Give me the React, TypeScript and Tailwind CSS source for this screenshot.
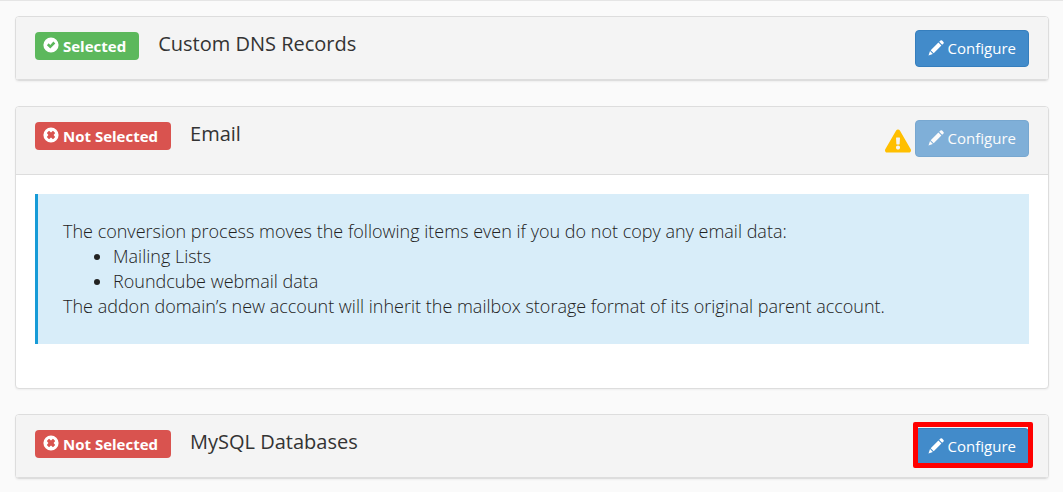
import type { ReactNode } from "react";
import { FaExclamationTriangle } from "react-icons/fa";

function OkSign() {
  return (
    <svg viewBox="0 0 32 32" className="-mt-0.5 size-4 shrink-0" fill="currentColor" aria-hidden="true">
      <path
        fillRule="evenodd"
        d="M16 0.8a15.2 15.2 0 1 0 0 30.4a15.2 15.2 0 1 0 0-30.4zM14.6 23.2L7.8 16.4L11.4 12.6L14.6 15.8L20.8 9.2L24.6 13z"
      />
    </svg>
  );
}

function RemoveSign() {
  return (
    <svg viewBox="0 0 32 32" className="-mt-0.5 size-4 shrink-0" fill="currentColor" aria-hidden="true">
      <path
        fillRule="evenodd"
        d="M16 0.8a15.2 15.2 0 1 0 0 30.4a15.2 15.2 0 1 0 0-30.4zM12 7.6L16 10.8L20 7.6L24.4 12L21.2 16L24.4 20L20 24.4L16 21.2L12 24.4L7.6 20L10.8 16L7.6 12z"
      />
    </svg>
  );
}

function Pencil() {
  return (
    <svg viewBox="0 0 32 32" className="-mt-0.5 size-4 shrink-0" fill="currentColor" aria-hidden="true">
      <path d="M22.4 3.6L25 1Q26.6 -0.4 28.2 1.1L30.9 3.8Q32.4 5.4 31 7L28.4 9.6zM20.8 5.2L26.8 11.2L11.4 26.6L5.4 20.6zM4 22.2L9.8 28L1 31z" />
    </svg>
  );
}

function StatusBadge({ selected }: { selected: boolean }) {
  const color = selected ? "bg-[#5cb85c]" : "bg-[#d9534f]";
  return (
    <span
      className={`mt-0.5 flex h-7 items-center gap-1 rounded pr-[13px] pl-2 text-[15px] leading-7 font-bold text-white ${color}`}
    >
      {selected ? <OkSign /> : <RemoveSign />}
      {selected ? "Selected" : "Not Selected"}
    </span>
  );
}

function ConfigureButton({ disabled }: { disabled?: boolean }) {
  return (
    <button
      type="button"
      disabled={disabled}
      className="flex h-[37px] items-center gap-1 rounded border border-[#357ebd] bg-[#428bca] px-3 text-[15px] text-white disabled:opacity-65"
    >
      <Pencil />
      Configure
    </button>
  );
}

interface PanelProps {
  title: string;
  selected: boolean;
  warning?: boolean;
  highlighted?: boolean;
  children?: ReactNode;
}

function Panel({ title, selected, warning, highlighted, children }: PanelProps) {
  return (
    <section className="overflow-hidden rounded border border-[#dddddd] bg-white shadow-xs">
      <header
        className={`flex items-start border-b border-[#dddddd] bg-[#f4f4f4] px-[19px] pt-[13px] ${
          children ? "pb-[17px]" : "pb-3"
        }`}
      >
        <StatusBadge selected={selected} />
        <h2 className="ml-[19px] text-[20px] leading-7 font-normal text-[#333333]">{title}</h2>
        <div className="relative ml-auto flex items-center gap-1">
          {warning && <FaExclamationTriangle className="mt-1 size-[26px] text-[#ffbf00]" title="Warning" />}
          <ConfigureButton disabled={warning} />
          {highlighted && (
            <span className="pointer-events-none absolute -top-1.5 -right-1 -bottom-[3px] -left-0.5 rounded-xs border-5 border-[#ff0000]" />
          )}
        </div>
      </header>
      {children}
    </section>
  );
}

export default function App() {
  return (
    <main className="flex min-h-screen flex-col gap-[25px] border-t border-[#e5e5e5] bg-[#fafafa] pt-[15px] pr-3.5 pb-3 pl-[15px] font-['Open_Sans',sans-serif]">
      <Panel title="Custom DNS Records" selected />
      <Panel title="Email" selected={false} warning>
        <div className="px-[19px] pt-[19px] pb-11">
          <div className="border-l-3 border-[#179bd7] bg-[#d8edf9] p-[25px] text-[18px] leading-[25px] font-light text-[#222222]">
            <p>The conversion process moves the following items even if you do not copy any email data:</p>
            <ul className="list-disc pl-[50px]">
              <li>Mailing Lists</li>
              <li>Roundcube webmail data</li>
            </ul>
            <p>The addon domain’s new account will inherit the mailbox storage format of its original parent account.</p>
          </div>
        </div>
      </Panel>
      <Panel title="MySQL Databases" selected={false} highlighted />
    </main>
  );
}
